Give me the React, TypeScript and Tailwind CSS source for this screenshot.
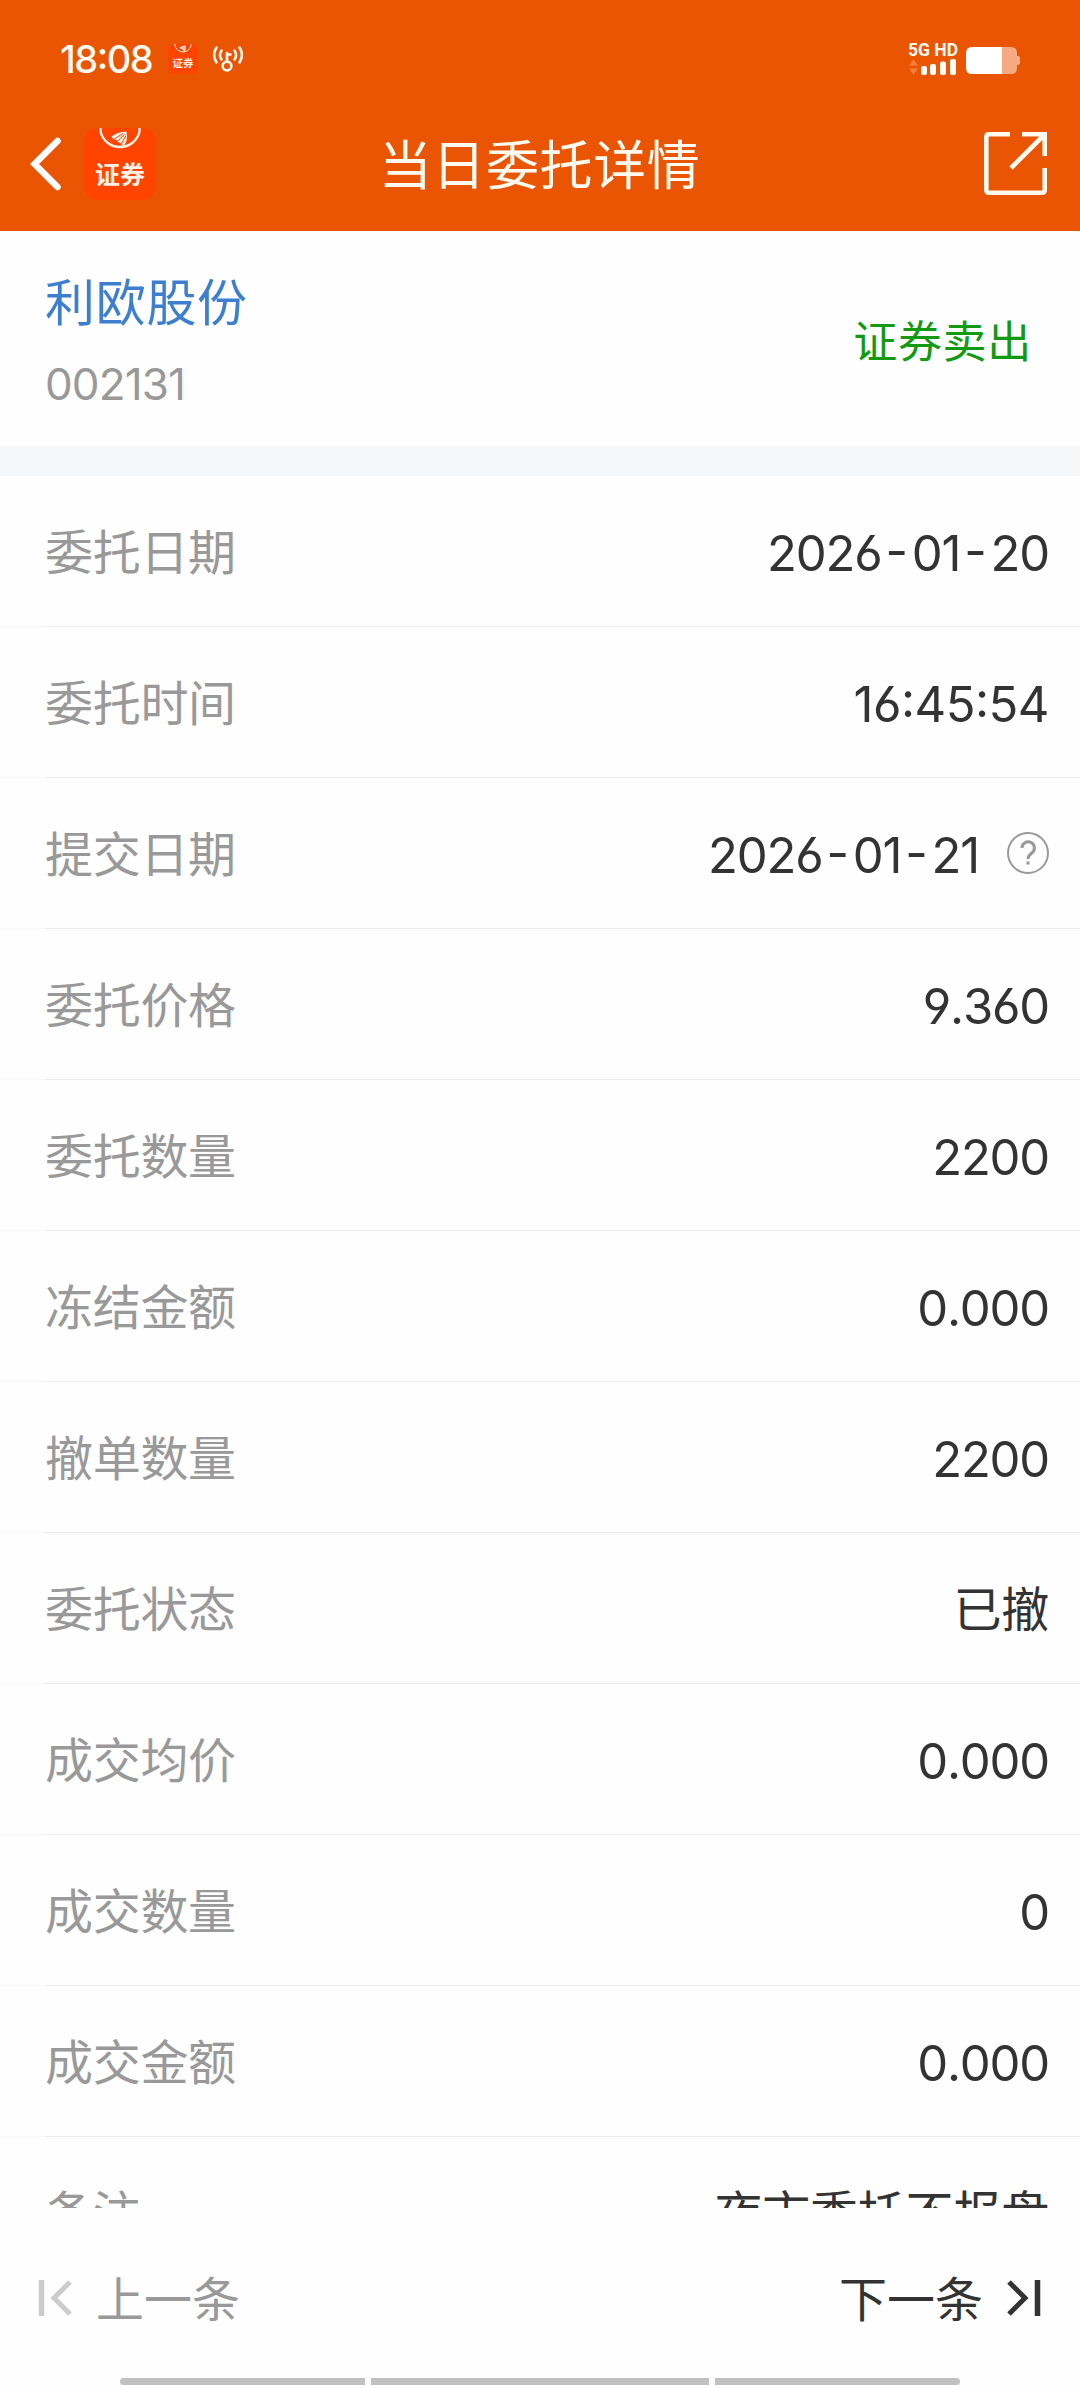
const rows: { label: string; value: string; help?: boolean; cjk?: boolean }[] = [
  { label: "委托日期", value: "2026-01-20" },
  { label: "委托时间", value: "16:45:54" },
  { label: "提交日期", value: "2026-01-21", help: true },
  { label: "委托价格", value: "9.360" },
  { label: "委托数量", value: "2200" },
  { label: "冻结金额", value: "0.000" },
  { label: "撤单数量", value: "2200" },
  { label: "委托状态", value: "已撤", cjk: true },
  { label: "成交均价", value: "0.000" },
  { label: "成交数量", value: "0" },
  { label: "成交金额", value: "0.000" },
  { label: "备注", value: "夜市委托不报盘", cjk: true },
];

function AppLogo({ className }: { className?: string }) {
  return (
    <svg viewBox="0 0 72 72" className={className}>
      <rect width="72" height="72" rx="13" fill="#ff4400" />
      <path
        d="M16.5 0v3.500a20 20 0 0 0 39 0V0"
        fill="none"
        stroke="#fff1e6"
        strokeWidth="2.4"
      />
      {/* feather */}
      <path
        d="M27.500 8.500Q33 4 42.500 3.500Q44.500 12 39.500 18.500L37.500 16.500L36.500 15L34 14L32.500 12L29.500 11.500z"
        fill="#fff1e6"
      />
      <path d="M29.500 11.500L39 5.500M33 13.500L40.500 6.500M37 16.500L42 7.500" stroke="#ff4400" strokeWidth="1" />
      <text
        x="36"
        y="55.500"
        textAnchor="middle"
        fontSize="25"
        fontWeight="700"
        fill="#fff1e6"
        className="font-['Noto_Sans_CJK_SC',sans-serif]"
      >
        证券
      </text>
    </svg>
  );
}

function StatusBar() {
  return (
    <div className="flex h-[118px] items-center justify-between pl-[60px] pr-[60px]">
      <div className="flex items-center">
        <span className="w-[108px] text-[38px] leading-none font-medium tracking-[-1.5px]">
          18:08
        </span>
        <AppLogo className="h-[30px] w-[30px]" />
        {/* hotspot key */}
        <svg
          viewBox="0 0 30 26"
          className="ml-[15px] h-[26px] w-[30px]"
          fill="none"
          stroke="#fff6ea"
          strokeWidth="2.6"
          strokeLinecap="round"
        >
          <circle cx="14" cy="20" r="4.4" />
          <path d="M14 15.500V7M14 8.500h3.500" />
          <path d="M8.500 4.500a8 8 0 0 0 0 9M3.500 1.500a14 14 0 0 0 0 15" />
          <path d="M21.500 4.500a8 8 0 0 1 0 9M26.500 1.500a14 14 0 0 1 0 15" />
        </svg>
      </div>
      <div className="flex items-center gap-[9px]">
        <div className="-mt-[2px] w-[49px]">
          <div className="text-[17.5px] leading-[18px] font-bold whitespace-nowrap font-[Roboto,sans-serif]">
            5G HD
          </div>
          <svg viewBox="0 0 49 16" className="block h-[16px] w-[49px]">
            <path d="M1 6.500l4.500-6 4.500 6zM1 9.500h9l-4.500 6z" fill="#f4803c" />
            <g fill="#fffaf4">
              <rect x="13" y="7" width="6" height="9" rx="2" />
              <rect x="22" y="5" width="6" height="11" rx="2" />
              <rect x="32" y="2.500" width="6" height="13.500" rx="2" />
              <rect x="42" y="0" width="6" height="16" rx="2" />
            </g>
          </svg>
        </div>
        <svg viewBox="0 0 54 27" className="mt-[2px] h-[27px] w-[54px]">
          <path
            d="M35 0h10q6 0 6 6v3h1q2 0 2 2v5q0 2-2 2h-1v3q0 6-6 6H35z"
            fill="#f5aa82"
          />
          <path d="M6 0h30v27H6q-6 0-6-6V6q0-6 6-6z" fill="#fff" />
        </svg>
      </div>
    </div>
  );
}

function Header() {
  return (
    <header className="h-[231px] bg-[#ea5504] text-[#fffaf0]">
      <StatusBar />
      <div className="flex h-[91px] items-center justify-between pr-[33px] pl-[30px]">
        <div className="flex w-[126px] items-center">
          <svg viewBox="0 0 32 54" className="h-[54px] w-[32px]">
            <path
              d="M27.500 4L4.500 27l23 23"
              fill="none"
              stroke="#fff"
              strokeWidth="6.500"
              strokeLinecap="round"
              strokeLinejoin="miter"
            />
          </svg>
          <AppLogo className="ml-[22px] h-[72px] w-[72px]" />
        </div>
        <h1 className="pt-[6px] pl-[2px] text-[53px] leading-none tracking-[0.6px]">当日委托详情</h1>
        <div className="flex w-[126px] justify-end">
          <svg
            viewBox="0 0 63 63"
            className="h-[63px] w-[63px]"
            fill="none"
            stroke="#fffaf0"
            strokeWidth="4.600"
          >
            <path d="M26 2.300H5Q2.300 2.300 2.300 5v53q0 2.700 2.700 2.700h53q2.700 0 2.700-2.700V36" />
            <path d="M38 2.300h22.700V24M60 3L27 36" />
          </svg>
        </div>
      </div>
    </header>
  );
}

function StockCard() {
  return (
    <section className="flex h-[215px] items-center justify-between pt-[6px] pr-[48px] pl-[45px]">
      <div>
        <div className="text-[50px] leading-[84px] tracking-[0.7px] text-[#3d7ecf]">
          利欧股份
        </div>
        <div className="text-[44px] leading-[78px] tracking-[-0.9px] text-[#999]">
          002131
        </div>
      </div>
      <div className="text-[44px] leading-none tracking-[0.7px] text-[#129a12]">证券卖出</div>
    </section>
  );
}

function Value({ value, cjk }: { value: string; cjk?: boolean }) {
  if (cjk) {
    return <span className="pt-[4px] text-[48px] tracking-[-0.2px]">{value}</span>;
  }
  // times are set a little looser than amounts
  if (value.includes(":")) {
    return <span className="pt-[4px] text-[49px] tracking-[-0.5px]">{value}</span>;
  }
  return (
    <span className="pt-[4px] text-[49px] tracking-[-1.2px]">
      {value.split("-").map((part, i) => (
        <span key={i}>
          {i > 0 && <span className="mr-[5px] ml-[4px]">-</span>}
          {part}
        </span>
      ))}
    </span>
  );
}

function Row({ label, value, help, cjk }: (typeof rows)[number]) {
  return (
    <div className="shrink-0">
      <div className="flex h-[150px] items-center justify-between pr-[31px] pl-[45px]">
        <span className="pt-[4px] text-[48px] leading-none tracking-[-0.3px] text-[#999]">{label}</span>
        <span className="flex items-center leading-none text-[#333]">
          <Value value={value} cjk={cjk} />
          {help && (
            <svg viewBox="0 0 42 42" className="ml-[28px] h-[42px] w-[42px]" fill="none" stroke="#999">
              <circle cx="21" cy="21" r="20" strokeWidth="2" />
              <path
                d="M15 16a6.200 6.200 0 1 1 9.800 5Q21 24 21 27"
                strokeWidth="3"
              />
              <rect x="19.500" y="29.500" width="3" height="3" fill="#999" stroke="none" />
            </svg>
          )}
        </span>
      </div>
      <div className="flex h-px">
        <div className="w-[45px] bg-[#f8f8f8]" />
        <div className="flex-1 bg-[#ececec]" />
      </div>
    </div>
  );
}

function Footer() {
  return (
    <footer className="h-[180px] bg-[#fefefe]">
      <div className="flex h-[170px] items-center justify-between pt-[10px] pr-[39px] pl-[38px] text-[48px] leading-none">
        <button className="flex items-center text-[#999]">
          <svg viewBox="0 0 34 36" className="h-[36px] w-[34px]" fill="none" stroke="#ccc">
            <path d="M3.500 0v36" strokeWidth="5.500" />
            <path d="M32 2L16 18l16 16" strokeWidth="5" />
          </svg>
          <span className="ml-[24px] pt-[3px]">上一条</span>
        </button>
        <button className="flex items-center text-[#333]">
          <span className="pt-[3px]">下一条</span>
          <svg viewBox="0 0 34 36" className="ml-[24px] h-[36px] w-[34px]" fill="none" stroke="#333">
            <path d="M30.500 0v36" strokeWidth="5.500" />
            <path d="M2 2l16 16L2 34" strokeWidth="5" />
          </svg>
        </button>
      </div>
      {/* system gesture bar */}
      <div className="flex h-[7px] gap-[6px] px-[120px]">
        <div className="w-[245px] rounded-l-full bg-[#c1c1c1]" />
        <div className="flex-1 bg-[#c1c1c1]" />
        <div className="w-[245px] rounded-r-full bg-[#c1c1c1]" />
      </div>
    </footer>
  );
}

export default function App() {
  return (
    <div className="flex h-[2388px] w-[1080px] flex-col overflow-hidden bg-[#fefefe] font-[Inter,'Noto_Sans_CJK_SC',sans-serif] [font-feature-settings:'cv03','cv04','case'] [font-kerning:none]">
      <Header />
      <StockCard />
      <div className="h-[30px] bg-[#f6f7f9]" />
      <main className="flex min-h-0 flex-1 flex-col overflow-hidden">
        {rows.map((row) => (
          <Row key={row.label} {...row} />
        ))}
      </main>
      <Footer />
    </div>
  );
}
